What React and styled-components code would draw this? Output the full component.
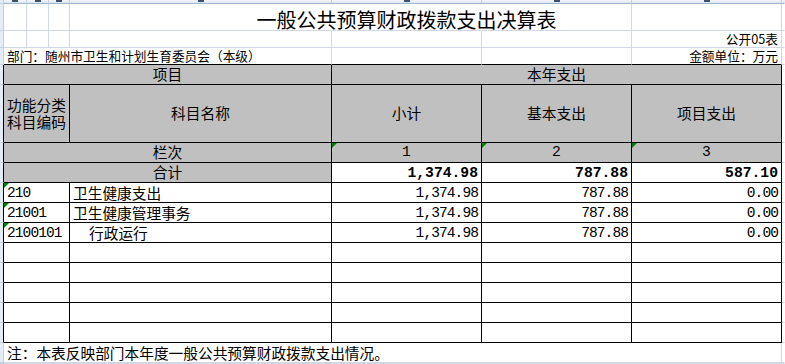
import React from 'react'
import styled, { createGlobalStyle, css } from 'styled-components'

const GRID = '#d0d7e5'
const LINE = '#000'
const HEAD = '#c0c0c0'
const CJK = '"Noto Sans CJK SC", "Noto Sans", sans-serif'
const MONO = '"Liberation Mono", "Noto Sans CJK SC", monospace'

const GlobalStyle = createGlobalStyle`
    html, body {
        margin: 0;
        background: #fff;
        overflow: hidden;
    }
`

const Sheet = styled.div`
    display: grid;
    grid-template-columns: 4px 23px 22px 21px 262px 150px 150px 150px 1fr;
    grid-template-rows: 4px 27px 17px 17px 20px 58px 20px 20px repeat(8, 20px) 20px 1fr;
    width: 100vw;
    height: 100vh;
    font-family: ${CJK};
    color: #000;
`

// bottom edge of the column header strip; only the feet of the letters show
const ColHead = styled.div`
    box-sizing: border-box;
    background: linear-gradient(#f3f6fa, #dfe6f0);
    border-bottom: 1px solid #9eb6ce;
    border-right: 1px solid ${p => (p.$last ? 'transparent' : '#c5d1e0')};
    display: flex;
    justify-content: center;
    align-items: flex-start;

    &::after {
        content: '';
        display: ${p => (p.$last ? 'none' : 'block')};
        width: 6px;
        height: 2px;
        background: #3a4f6a;
    }
`

const Gutter = styled.div`
    box-sizing: border-box;
    background: #e4ecf7;
    border-bottom: 1px solid #c5d1e0;
    border-right: 1px solid ${p => (p.$edge ? LINE : '#c5d1e0')};
`

const cellBase = css`
    box-sizing: border-box;
    grid-column: span ${p => p.$span || 1};
    border-right: 1px solid ${p => p.$r || GRID};
    border-bottom: 1px solid ${p => p.$b || GRID};
    background: ${p => p.$bg || 'transparent'};
    display: flex;
    align-items: center;
    min-width: 0;
    white-space: nowrap;
    position: relative;
`

const flag = css`
    &::before {
        content: '';
        position: absolute;
        top: 0;
        left: 0;
        border-top: 5px solid #008000;
        border-right: 5px solid transparent;
    }
`

const Blank = styled.div`
    ${cellBase}
`

const Title = styled.div`
    ${cellBase}
    justify-content: center;
    font-size: 20px;
    line-height: 20px;
    padding-top: 5px;
`

const Info = styled.div`
    ${cellBase}
    justify-content: ${p => (p.$right ? 'flex-end' : 'flex-start')};
    padding: 0 3px;
    font-size: 12.7px;
    line-height: 14px;
`

const HeadCell = styled.div`
    ${cellBase}
    justify-content: center;
    text-align: center;
    background: ${HEAD};
    font-size: 14.7px;
    line-height: 16.5px;
    font-family: ${p => (p.$num ? MONO : CJK)};
    ${p => p.$flag && flag}
`

const Lines = styled.div`
    display: flex;
    flex-direction: column;
    gap: 0;
`

const NumCell = styled.div`
    ${cellBase}
    justify-content: flex-end;
    padding-right: 3px;
    font-family: ${MONO};
    font-size: ${p => (p.$bold ? '14.7px' : '14.5px')};
    font-weight: ${p => (p.$bold ? 700 : 400)};
    letter-spacing: ${p => (p.$bold ? '0' : '-0.9px')};
    line-height: 16px;
`

const CodeCell = styled.div`
    ${cellBase}
    padding-left: 3px;
    font-family: ${MONO};
    font-size: 14.5px;
    letter-spacing: -0.9px;
    line-height: 16px;
    ${p => p.$flag && flag}
`

const NameCell = styled.div`
    ${cellBase}
    padding-left: ${p => (p.$indent ? '19px' : '3px')};
    font-size: 14.7px;
    line-height: 16px;
`

const Note = styled.div`
    ${cellBase}
    padding-left: 3px;
    font-size: 14.7px;
    line-height: 16px;
`

const rows = [
    { code: '210', name: '卫生健康支出', total: '1,374.98', basic: '787.88', project: '0.00' },
    { code: '21001', name: '卫生健康管理事务', total: '1,374.98', basic: '787.88', project: '0.00' },
    { code: '2100101', name: '行政运行', indent: true, total: '1,374.98', basic: '787.88', project: '0.00' },
    {}, {}, {}, {}, {},
]

export default function App() {
    return (
        <>
            <GlobalStyle />
            <Sheet>
                {/* column header strip */}
                <Gutter />
                {Array.from({ length: 8 }).map((_, i) => (
                    <ColHead key={i} $last={i === 7} />
                ))}

                {/* title row */}
                <Gutter />
                <Blank /><Blank /><Blank />
                <Blank $r="transparent" />
                <Title $r="transparent">一般公共预算财政拨款支出决算表</Title>
                <Blank /><Blank />
                <Blank $r="transparent" />

                {/* form number */}
                <Gutter />
                <Blank /><Blank /><Blank /><Blank /><Blank /><Blank />
                <Info $right>公开05表</Info>
                <Blank $r="transparent" />

                {/* department / unit */}
                <Gutter />
                <Info $span={4} $b={LINE}>部门：随州市卫生和计划生育委员会（本级）</Info>
                <Blank $b={LINE} /><Blank $b={LINE} />
                <Info $right $b={LINE}>金额单位：万元</Info>
                <Blank $r="transparent" />

                {/* header */}
                <Gutter $edge />
                <HeadCell $span={4} $r={LINE} $b={LINE}>项目</HeadCell>
                <HeadCell $span={3} $r={LINE} $b={LINE}>本年支出</HeadCell>
                <Blank $r="transparent" />

                <Gutter $edge />
                <HeadCell $span={3} $r={LINE} $b={LINE}>
                    <Lines><span>功能分类</span><span>科目编码</span></Lines>
                </HeadCell>
                <HeadCell $r={LINE} $b={LINE}>科目名称</HeadCell>
                <HeadCell $r={LINE} $b={LINE}>小计</HeadCell>
                <HeadCell $r={LINE} $b={LINE}>基本支出</HeadCell>
                <HeadCell $r={LINE} $b={LINE}>项目支出</HeadCell>
                <Blank $r="transparent" />

                <Gutter $edge />
                <HeadCell $span={4} $r={LINE} $b={LINE}>栏次</HeadCell>
                <HeadCell $num $flag $r={LINE} $b={LINE}>1</HeadCell>
                <HeadCell $num $flag $r={LINE} $b={LINE}>2</HeadCell>
                <HeadCell $num $flag $r={LINE} $b={LINE}>3</HeadCell>
                <Blank $r="transparent" />

                <Gutter $edge />
                <HeadCell $span={4} $r={LINE} $b={LINE}>合计</HeadCell>
                <NumCell $bold $r={LINE} $b={LINE}>1,374.98</NumCell>
                <NumCell $bold $r={LINE} $b={LINE}>787.88</NumCell>
                <NumCell $bold $r={LINE} $b={LINE}>587.10</NumCell>
                <Blank $r="transparent" />

                {/* data rows */}
                {rows.map((row, i) => (
                    <React.Fragment key={i}>
                        <Gutter $edge />
                        <CodeCell $span={3} $flag={!!row.code} $r={LINE} $b={LINE}>{row.code}</CodeCell>
                        <NameCell $indent={row.indent} $r={LINE} $b={LINE}>{row.name}</NameCell>
                        <NumCell $r={LINE} $b={LINE}>{row.total}</NumCell>
                        <NumCell $r={LINE} $b={LINE}>{row.basic}</NumCell>
                        <NumCell $r={LINE} $b={LINE}>{row.project}</NumCell>
                        <Blank $r="transparent" />
                    </React.Fragment>
                ))}

                {/* note */}
                <Gutter />
                <Note $span={7}>注：本表反映部门本年度一般公共预算财政拨款支出情况。</Note>
                <Blank $r="transparent" />

                <Gutter />
                <Blank /><Blank /><Blank /><Blank /><Blank /><Blank /><Blank />
                <Blank $r="transparent" />
            </Sheet>
        </>
    )
}
